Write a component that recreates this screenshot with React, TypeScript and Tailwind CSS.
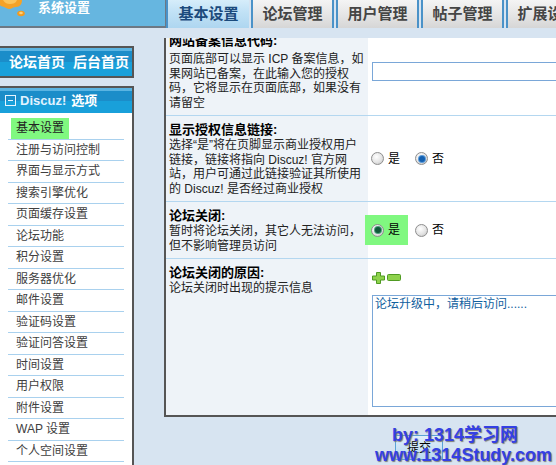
import React from 'react';

const tabs = ['基本设置', '论坛管理', '用户管理', '帖子管理', '扩展设置'];

const menu = [
  '基本设置',
  '注册与访问控制',
  '界面与显示方式',
  '搜索引擎优化',
  '页面缓存设置',
  '论坛功能',
  '积分设置',
  '服务器优化',
  '邮件设置',
  '验证码设置',
  '验证问答设置',
  '时间设置',
  '用户权限',
  '附件设置',
  'WAP 设置',
  '个人空间设置',
];

function Logo() {
  return (
    <svg width="28" height="20" viewBox="0 0 28 20" className="shrink-0">
      <path
        d="M0 0 H22 C22 4 20 7 16 7 C13 7 12 9 9 9 C6 9 5 6.5 2.5 6.5 C1 6.5 0 5.5 0 4.5 Z"
        fill="#f5a226"
      />
      <path d="M3 0 H17 C16 3 13 4 10 4 C7 4 5 3 3 0 Z" fill="#fbc45a" />
      <ellipse cx="21" cy="13.5" rx="3.8" ry="2.8" fill="#f39a1e" />
      <ellipse cx="21" cy="13" rx="1.8" ry="1.2" fill="#fcd27a" />
    </svg>
  );
}

function Radio({ checked, green }: { checked?: boolean; green?: boolean }) {
  return (
    <span className="w-[13px] h-[13px] rounded-full border border-[#8e8e8e] bg-[radial-gradient(circle_at_40%_35%,#ffffff_0%,#e4e4e4_55%,#bdbdbd_100%)] flex items-center justify-center shrink-0">
      {checked && (
        <span
          className={
            green
              ? 'w-[6px] h-[6px] rounded-full bg-[#0f5a3a] shadow-[0_0_0_1px_#4aa27a]'
              : 'w-[6px] h-[6px] rounded-full bg-[#1460b0] shadow-[0_0_0_1px_#5a9ad8]'
          }
        />
      )}
    </span>
  );
}

function PlusMinus() {
  return (
    <svg width="30" height="12" viewBox="0 0 30 12" className="ml-[1px] shrink-0">
      <path
        d="M4.5 0.5 H8.5 V4 H12.5 V8 H8.5 V11.5 H4.5 V8 H0.5 V4 H4.5 Z"
        fill="#8ed24c"
        stroke="#4f9a22"
      />
      <rect x="15.5" y="2.5" width="13" height="6" rx="1" fill="#8ed24c" stroke="#4f9a22" />
    </svg>
  );
}

export default function App() {
  return (
    <div className="relative w-[556px] h-[465px] overflow-hidden bg-[#d7e4f1] text-[12px] text-[#222] font-['Liberation_Sans','Noto_Sans_CJK_SC',sans-serif]">
      {/* Top bar */}
      <div className="flex h-[28px]">
        <div className="w-[166px] h-[28px] shrink-0 flex items-start bg-[#66b6e0] border-r border-b-2 border-[#6c7884]">
          <Logo />
          <span className="ml-[10px] mt-[1px] text-[13px] leading-[14px] font-bold text-white">
            系统设置
          </span>
        </div>
        <div className="flex">
          {tabs.map((t, i) => (
            <div
              key={t}
              className={
                i === 0
                  ? 'w-[83px] h-[28px] mr-[2px] shrink-0 flex items-center justify-center text-[15px] font-bold text-[#1b4a7c] border-l-2 border-[#4a92c8] bg-[linear-gradient(to_bottom,#d6edfa_0%,#c2e2f6_40%,#aed6f0_100%)]'
                  : 'w-[83px] h-[28px] mr-[2px] shrink-0 flex items-center justify-center text-[15px] font-bold text-[#454545] border-x-2 border-[#4a92c8] bg-[linear-gradient(to_bottom,#f4f4f4_0%,#e6e6e6_50%,#d6d6d6_100%)]'
              }
            >
              {t}
            </div>
          ))}
        </div>
      </div>

      <div className="flex">
        {/* Sidebar */}
        <div className="w-[164px] shrink-0">
          <div className="mt-[18px] w-[134px] h-[32px] border-y-2 border-r-2 border-[#555] bg-[linear-gradient(to_bottom,#5ab4e2_0px,#5ab4e2_3px,#1b8dc9_3px,#1b8dc9_50%,#19a0da_50%,#19a0da_100%)] flex items-center pl-[9px] text-[14px] leading-none font-bold text-white">
            <span>论坛首页</span>
            <span className="ml-[8px]">后台首页</span>
          </div>

          <div className="mt-[8px] w-[134px] h-[400px] border-t-2 border-r-2 border-[#555] bg-white">
            <div className="h-[25px] bg-[linear-gradient(to_bottom,#5ab4e2_0px,#5ab4e2_3px,#1b8dc9_3px,#1b8dc9_50%,#19a0da_50%,#19a0da_100%)] flex items-center pl-[5px]">
              <span className="w-[11px] h-[11px] border border-[#e6f4ff] flex items-center justify-center">
                <span className="w-[5px] h-px bg-[#e6f4ff]" />
              </span>
              <span className="ml-[4px] text-[13px] leading-none font-bold text-[#e2f3ff]">Discuz!</span>
              <span className="ml-[5px] text-[13px] leading-none font-bold text-white">选项</span>
            </div>
            <ul className="pt-[5px] ml-[8px] w-[116px]">
              {menu.map((m, i) => (
                <li
                  key={m}
                  className="h-[21.5px] border-b border-[#a9d1ee] flex items-stretch pl-[3px] text-[#404040]"
                >
                  <span
                    className={
                      i === 0
                        ? 'px-[5px] flex items-center bg-[#80f880] text-[#222]'
                        : 'px-[5px] flex items-center'
                    }
                  >
                    {m}
                  </span>
                </li>
              ))}
            </ul>
          </div>
        </div>

        {/* Main panel */}
        <div className="w-[420px] shrink-0">
          <div className="mt-[10px] h-[379px] border-l-2 border-b-2 border-[#555] overflow-hidden flex flex-col">
            {/* Row 1 (scrolled, top clipped) */}
            <div className="-mt-[8px] flex border-b border-[#b4d7f0]">
              <div className="w-[202px] shrink-0 bg-[#eef3f8] pl-[3px] pt-[6px] pb-[5px] whitespace-nowrap">
                <div className="-mt-[3px] mb-[3px] text-[13px] leading-[16px] font-bold text-black">网站备案信息代码:</div>
                <div className="leading-[14.5px]">
                  <div>页面底部可以显示 ICP 备案信息，如</div>
                  <div>果网站已备案，在此输入您的授权</div>
                  <div>码，它将显示在页面底部，如果没有</div>
                  <div>请留空</div>
                </div>
              </div>
              <div className="flex-1 bg-white pl-[3px] flex items-center">
                <div className="ml-[1px] -mt-[2px] w-[200px] h-[19px] border border-[#7aa7d8] bg-white" />
              </div>
            </div>

            {/* Row 2 */}
            <div className="flex border-b border-[#b4d7f0]">
              <div className="w-[202px] shrink-0 bg-[#eef3f8] pl-[3px] pt-[6px] pb-[5px] whitespace-nowrap">
                <div className="text-[13px] leading-[16px] font-bold text-black">显示授权信息链接:</div>
                <div className="leading-[14.5px]">
                  <div>选择“是”将在页脚显示商业授权用户</div>
                  <div>链接，链接将指向 Discuz! 官方网</div>
                  <div>站，用户可通过此链接验证其所使用</div>
                  <div>的 Discuz! 是否经过商业授权</div>
                </div>
              </div>
              <div className="flex-1 bg-white pl-[3px] flex items-center text-black">
                <Radio />
                <span className="ml-[4px]">是</span>
                <span className="ml-[15px] flex items-center">
                  <Radio checked />
                  <span className="ml-[4px]">否</span>
                </span>
              </div>
            </div>

            {/* Row 3 */}
            <div className="flex border-b border-[#b4d7f0]">
              <div className="w-[202px] shrink-0 bg-[#eef3f8] pl-[3px] pt-[6px] pb-[5px] whitespace-nowrap">
                <div className="text-[13px] leading-[16px] font-bold text-black">论坛关闭:</div>
                <div className="leading-[14.5px]">
                  <div>暂时将论坛关闭，其它人无法访问，</div>
                  <div>但不影响管理员访问</div>
                </div>
              </div>
              <div className="flex-1 bg-white pl-[3px] flex items-center text-black">
                <span className="-ml-[6px] h-[30px] pl-[6px] pr-[8px] flex items-center bg-[#80f880]">
                  <Radio checked green />
                  <span className="ml-[4px]">是</span>
                </span>
                <span className="ml-[7px] flex items-center">
                  <Radio />
                  <span className="ml-[4px]">否</span>
                </span>
              </div>
            </div>

            {/* Row 4 */}
            <div className="flex flex-1">
              <div className="w-[202px] shrink-0 bg-[#eef3f8] pl-[3px] pt-[6px] whitespace-nowrap">
                <div className="text-[13px] leading-[16px] font-bold text-black">论坛关闭的原因:</div>
                <div className="leading-[14.5px]">论坛关闭时出现的提示信息</div>
              </div>
              <div className="flex-1 bg-white pl-[3px] pt-[13px] flex flex-col items-start">
                <PlusMinus />
                <div className="ml-[1px] mt-[11px] w-[200px] h-[112px] border border-[#7aa7d8] pl-[2px] pt-[1px] leading-[14.5px] text-[#10609e] whitespace-nowrap">
                  论坛升级中，请稍后访问......
                </div>
              </div>
            </div>
          </div>

          <button className="mt-[18px] ml-[231px] w-[48px] h-[25px] border border-[#5aa3d6] bg-[linear-gradient(to_bottom,#e2f0fb,#b8d8f2)] text-[12px] text-black flex items-center justify-center">
            提交
          </button>
        </div>
      </div>

      {/* Watermark over the page */}
      <div className="absolute left-[375px] top-[425px] text-[18px] leading-[20px] font-bold text-[#3440e4] whitespace-nowrap [text-shadow:1px_1px_1px_#7c7c7c]">
        <div className="ml-[17px]">by: 1314学习网</div>
        <div>www.1314Study.com</div>
      </div>
    </div>
  );
}
